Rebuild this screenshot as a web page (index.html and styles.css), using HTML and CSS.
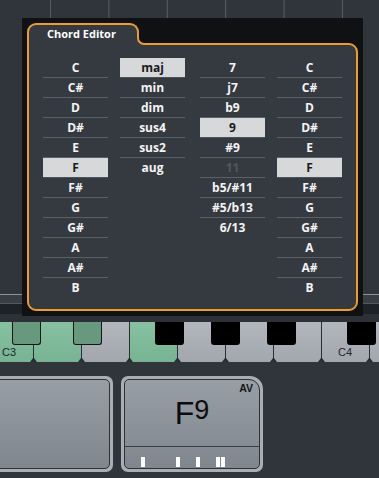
FILE: index.html
```html
<!DOCTYPE html>
<html lang="en">
<head>
    <meta charset="UTF-8">
    <meta name="viewport" content="width=device-width, initial-scale=1.0">
    <title>Chord Editor</title>
    <link rel="stylesheet" href="styles.css">
</head>
<body>
    <!-- Arranger lanes behind the popup -->
    <div class="track">
        <div class="lanes"></div>
        <div class="rule-light"></div>
        <div class="band-mid"></div>
        <div class="rule-dim"></div>
        <div class="band-dark"></div>
        <div class="band-low"></div>

        <!-- Chord Editor popup -->
        <div class="popup">
            <div class="tab">Chord Editor</div>
            <div class="panel">
                <div class="col">
                    <div class="row">C</div>
                    <div class="row">C#</div>
                    <div class="row">D</div>
                    <div class="row">D#</div>
                    <div class="row">E</div>
                    <div class="row on">F</div>
                    <div class="row">F#</div>
                    <div class="row">G</div>
                    <div class="row">G#</div>
                    <div class="row">A</div>
                    <div class="row">A#</div>
                    <div class="row">B</div>
                </div>
                <div class="col">
                    <div class="row on">maj</div>
                    <div class="row">min</div>
                    <div class="row">dim</div>
                    <div class="row">sus4</div>
                    <div class="row">sus2</div>
                    <div class="row">aug</div>
                </div>
                <div class="col ext">
                    <div class="row">7</div>
                    <div class="row">j7</div>
                    <div class="row">b9</div>
                    <div class="row on">9</div>
                    <div class="row">#9</div>
                    <div class="row off">11</div>
                    <div class="row">b5/#11</div>
                    <div class="row">#5/b13</div>
                    <div class="row">6/13</div>
                </div>
                <div class="col">
                    <div class="row">C</div>
                    <div class="row">C#</div>
                    <div class="row">D</div>
                    <div class="row">D#</div>
                    <div class="row">E</div>
                    <div class="row on">F</div>
                    <div class="row">F#</div>
                    <div class="row">G</div>
                    <div class="row">G#</div>
                    <div class="row">A</div>
                    <div class="row">A#</div>
                    <div class="row">B</div>
                </div>
            </div>
        </div>
    </div>

    <!-- Keyboard -->
    <div class="keyboard">
        <div class="whites">
            <div class="white hl"><span class="note">C3</span></div>
            <div class="white hl"></div>
            <div class="white"></div>
            <div class="white hl"></div>
            <div class="white"></div>
            <div class="white"></div>
            <div class="white"></div>
            <div class="white"><span class="note">C4</span></div>
            <div class="white"></div>
        </div>
        <div class="black hl" style="left: 12px"></div>
        <div class="black hl" style="left: 73px"></div>
        <div class="black" style="left: 155px"></div>
        <div class="black" style="left: 211px"></div>
        <div class="black" style="left: 267px"></div>
        <div class="black" style="left: 347px"></div>
    </div>

    <!-- Chord cards -->
    <div class="cards">
        <div class="card">
            <div class="card-in"></div>
        </div>
        <div class="card big">
            <div class="card-in">
                <div class="chord">
                    <span class="av">AV</span>
                    <span class="root">F</span><span class="ext-num">9</span>
                </div>
                <div class="beats">
                    <span class="beat" style="left: 16px"></span>
                    <span class="beat" style="left: 51px"></span>
                    <span class="beat" style="left: 71px"></span>
                    <span class="beat" style="left: 91px"></span>
                    <span class="beat" style="left: 96px"></span>
                </div>
            </div>
        </div>
    </div>
</body>
</html>
```

FILE: styles.css
```css
* {
    box-sizing: border-box;
    margin: 0;
    padding: 0;
}

body {
    background: #30353c;
    width: 379px;
    height: 478px;
    overflow: hidden;
    font-family: 'Open Sans', sans-serif;
}

/* arranger background */
.track {
    position: relative;
    height: 322px;
    display: flex;
    flex-direction: column;
}

.lanes {
    height: 294px;
    background: linear-gradient(to right, #555e68 1px, transparent 1px);
    background-size: 58.4px 100%;
    background-position: 50px 0;
}

.rule-light {
    height: 1px;
    background: #8c9299;
}

.band-mid {
    height: 8px;
    background: #393e45;
}

.rule-dim {
    height: 1px;
    background: #535960;
}

.band-dark {
    height: 10px;
    background: #1e2226;
}

.band-low {
    height: 8px;
    background: #2c3137;
}

/* popup */
.popup {
    position: absolute;
    left: 22px;
    top: 18px;
    width: 341px;
    height: 298px;
    background: #101112;
    padding: 5px;
    display: flex;
    flex-direction: column;
}

.tab {
    position: relative;
    z-index: 1;
    width: 112px;
    height: 22px;
    margin-bottom: -2px;
    border: 2px solid #ec9c2c;
    border-bottom: none;
    border-radius: 9px 9px 0 0;
    background: #353a41;
    color: #fff;
    font-weight: 700;
    font-size: 11px;
    line-height: 18px;
    padding-left: 18px;
}

/* concave fillet where the tab meets the panel top */
.tab::before,
.tab::after {
    content: '';
    position: absolute;
    left: 108px;
    bottom: 0;
    width: 9px;
    height: 8px;
}

.tab::before {
    background: #353a41;
}

.tab::after {
    background: #101112;
    border-left: 2px solid #ec9c2c;
    border-bottom: 2px solid #ec9c2c;
    border-bottom-left-radius: 7px;
}

.panel {
    flex: 1;
    border: 2px solid #ec9c2c;
    border-radius: 0 9px 9px 9px;
    background: #353a41;
    padding: 13px 0 0 14px;
    display: flex;
    gap: 12px;
    align-items: flex-start;
}

.col {
    width: 65px;
}

.col.ext {
    margin-left: 3px;
}

.row {
    height: 20px;
    border-bottom: 1px solid #596068;
    text-align: center;
    color: #f4f4f4;
    font-weight: 700;
    font-size: 12px;
    line-height: 19px;
}

.row:last-child {
    border-bottom: none;
}

.row.on {
    background: #d6d8da;
    color: #1b1b1b;
    border-bottom-color: #4d5259;
}

.row.off {
    color: #50565c;
}

/* keyboard */
.keyboard {
    position: relative;
    height: 40px;
    overflow: hidden;
}

.whites {
    display: flex;
    height: 100%;
    margin-left: -15px;
}

.white {
    position: relative;
    flex: none;
    width: 48px;
    height: 100%;
    border-left: 1px solid #2a2e33;
    background: linear-gradient(#b3b7bd, #a2a6ad);
}

.white.hl {
    background: linear-gradient(#86c1a2, #78b394);
}

.white::after {
    content: '';
    position: absolute;
    left: -4px;
    bottom: 0;
    width: 1px;
    border-left: 3px solid transparent;
    border-right: 3px solid transparent;
    border-bottom: 4px solid #2a2e33;
}

.note {
    position: absolute;
    left: 16px;
    bottom: 4px;
    font-family: 'Liberation Sans', sans-serif;
    font-size: 11px;
    line-height: 11px;
    color: #23272c;
}

.black {
    position: absolute;
    top: 0;
    width: 29px;
    height: 23px;
    background: #000;
    border-radius: 0 0 3px 3px;
}

.black.hl {
    background: #66997d;
    border: 1px solid #151515;
    border-top: none;
}

/* chord cards */
.cards {
    display: flex;
    gap: 8px;
    margin-top: 14px;
    margin-left: -29px;
    height: 96px;
}

.card {
    width: 142px;
    height: 96px;
    border: 3px solid #a9aeb4;
    border-radius: 7px;
    background: #a9aeb4;
}

.card.big {
    border-radius: 7px 13px 7px 7px;
}

.card-in {
    height: 100%;
    border: 1px solid #2c3137;
    border-radius: 5px;
    background: linear-gradient(#989ea6, #7f868e);
    display: flex;
    flex-direction: column;
}

.card.big .card-in {
    border-radius: 5px 11px 5px 5px;
}

.chord {
    position: relative;
    height: 66px;
    display: flex;
    justify-content: center;
    align-items: center;
    font-family: 'Liberation Sans', sans-serif;
    color: #0c0c0c;
}

.root {
    font-size: 32px;
    line-height: 32px;
}

.ext-num {
    font-size: 27px;
    line-height: 27px;
    position: relative;
    top: -3px;
}

.av {
    position: absolute;
    top: 2px;
    right: 6px;
    font-weight: 700;
    font-size: 10.5px;
    line-height: 12px;
    color: #161616;
}

.beats {
    position: relative;
    flex: 1;
    border-top: 1px solid #3a3f46;
}

.beat {
    position: absolute;
    top: 10px;
    width: 4px;
    height: 10px;
    background: #fff;
}
```
